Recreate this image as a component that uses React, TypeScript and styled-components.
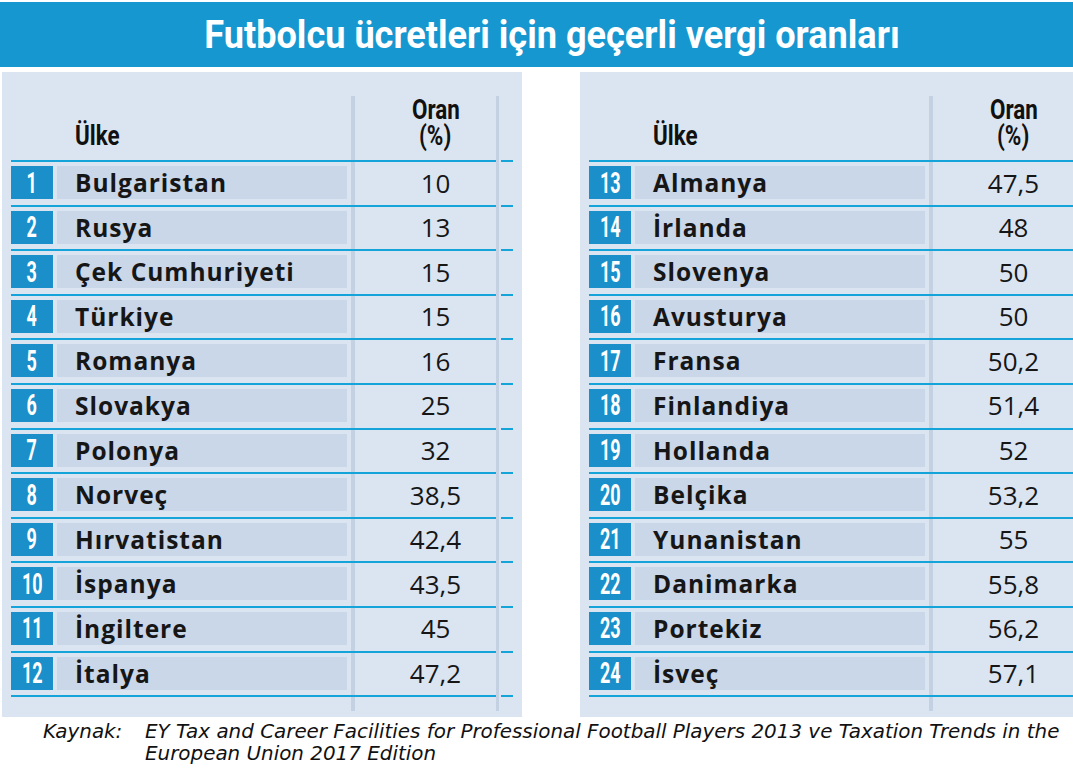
import React from 'react';
import styled, { createGlobalStyle } from 'styled-components';

const colors = {
  bar: '#1797cf',
  panel: '#dbe5f2',
  nameBg: '#c9d7e8',
  divider: '#c4d1e2',
  line: '#14a4da',
  numBox: '#1a8fc9',
  text: '#161616',
};

const heavy = `"Roboto", "Open Sans", sans-serif`;

const GlobalStyle = createGlobalStyle`
  html, body {
    margin: 0;
    padding: 0;
    background: #ffffff;
  }
  body {
    font-family: "Open Sans", "Noto Sans", sans-serif;
    color: ${colors.text};
    width: 1073px;
    height: 769px;
    overflow: hidden;
  }
`;

// no condensed face is installed, so the narrow headline type is squeezed
const Squeeze = styled.span<{ $x: number; $origin?: string }>`
  display: inline-block;
  white-space: nowrap;
  transform: scaleX(${(p) => p.$x});
  transform-origin: ${(p) => p.$origin || 'center'};
`;

const Page = styled.div`
  width: 1073px;
  height: 769px;
  overflow: hidden;
  padding-top: 2px;
  box-sizing: border-box;
`;

const TitleBar = styled.header`
  height: 65px;
  background: ${colors.bar};
  display: flex;
  align-items: center;
  justify-content: center;
`;

const Title = styled.h1`
  margin: 0;
  padding-left: 31px;
  font-family: ${heavy};
  font-weight: 700;
  font-size: 38px;
  line-height: 1;
  color: #ffffff;
`;

const Panels = styled.div`
  display: flex;
  gap: 58px;
  margin-top: 5px;
  padding-left: 2px;
`;

const Panel = styled.section`
  flex: 0 0 520px;
  background: ${colors.panel};
  padding: 24px 9px 6px 9px;
  box-sizing: border-box;
`;

// the two grey column rules run behind the rows
const Body = styled.div`
  width: 502px;
  padding-bottom: 14px;
  background:
    linear-gradient(${colors.divider}, ${colors.divider}) 340px 0 / 4px 100% no-repeat,
    linear-gradient(${colors.divider}, ${colors.divider}) 485px 0 / 3px 100% no-repeat;
`;

const HeaderRow = styled.div`
  height: 64px;
  display: flex;
  align-items: flex-end;
  padding-bottom: 11px;
  box-sizing: border-box;
  font-family: ${heavy};
  font-weight: 700;
  font-size: 28px;
  line-height: 26px;
  color: #111;
`;

const HeadName = styled.div`
  width: 344px;
  padding-left: 64px;
  box-sizing: border-box;
`;

const HeadValue = styled.div`
  width: 141px;
  padding-left: 20px;
  box-sizing: border-box;
  display: flex;
  flex-direction: column;
  align-items: center;
`;

const Row = styled.div<{ $last?: boolean }>`
  height: ${(p) => (p.$last ? '46.6px' : '44.6px')};
  box-sizing: border-box;
  display: flex;
  align-items: flex-start;
  padding-top: 4px;
  border-top: 2px solid;
  border-bottom: ${(p) => (p.$last ? '2px solid' : 'none')};
  border-image: linear-gradient(
      to right,
      ${colors.line} 484px,
      transparent 484px,
      transparent 489px,
      ${colors.line} 489px
    )
    1;
`;

const NumBox = styled.div`
  width: 42px;
  height: 33px;
  background: ${colors.numBox};
  color: #fff;
  display: flex;
  align-items: center;
  justify-content: center;
  font-family: ${heavy};
  font-weight: 700;
  font-size: 30px;
  line-height: 1;
`;

const NameCell = styled.div`
  margin-left: 4px;
  width: 290px;
  height: 33px;
  background: ${colors.nameBg};
  padding-left: 18px;
  box-sizing: border-box;
  display: flex;
  align-items: center;
  font-weight: 700;
  font-size: 24.5px;
  letter-spacing: 1px;
  white-space: nowrap;
`;

const ValueCell = styled.div`
  margin-left: 8px;
  width: 141px;
  height: 33px;
  padding-left: 20px;
  box-sizing: border-box;
  display: flex;
  align-items: center;
  justify-content: center;
  font-size: 26px;
  font-weight: 400;
`;

const Source = styled.footer`
  display: flex;
  padding: 4px 0 0 43px;
  font-family: "DejaVu Sans", "Open Sans", sans-serif;
  font-style: italic;
  font-size: 19.9px;
  line-height: 22px;
  color: #111;
`;

const SourceLabel = styled.div`
  flex: 0 0 102px;
`;

const SourceText = styled.div`
  white-space: nowrap;
`;

type Entry = [number, string, string];

const left: Entry[] = [
  [1, 'Bulgaristan', '10'],
  [2, 'Rusya', '13'],
  [3, 'Çek Cumhuriyeti', '15'],
  [4, 'Türkiye', '15'],
  [5, 'Romanya', '16'],
  [6, 'Slovakya', '25'],
  [7, 'Polonya', '32'],
  [8, 'Norveç', '38,5'],
  [9, 'Hırvatistan', '42,4'],
  [10, 'İspanya', '43,5'],
  [11, 'İngiltere', '45'],
  [12, 'İtalya', '47,2'],
];

const right: Entry[] = [
  [13, 'Almanya', '47,5'],
  [14, 'İrlanda', '48'],
  [15, 'Slovenya', '50'],
  [16, 'Avusturya', '50'],
  [17, 'Fransa', '50,2'],
  [18, 'Finlandiya', '51,4'],
  [19, 'Hollanda', '52'],
  [20, 'Belçika', '53,2'],
  [21, 'Yunanistan', '55'],
  [22, 'Danimarka', '55,8'],
  [23, 'Portekiz', '56,2'],
  [24, 'İsveç', '57,1'],
];

function RateTable({ rows }: { rows: Entry[] }) {
  return (
    <Panel>
      <Body>
        <HeaderRow>
          <HeadName>
            <Squeeze $x={0.8} $origin="left">Ülke</Squeeze>
          </HeadName>
          <HeadValue>
            <Squeeze $x={0.8}>Oran</Squeeze>
            <Squeeze $x={0.8}>(%)</Squeeze>
          </HeadValue>
        </HeaderRow>
        {rows.map(([rank, country, rate], i) => (
          <Row key={rank} $last={i === rows.length - 1}>
            <NumBox>
              <Squeeze $x={0.6}>{rank}</Squeeze>
            </NumBox>
            <NameCell>{country}</NameCell>
            <ValueCell>{rate}</ValueCell>
          </Row>
        ))}
      </Body>
    </Panel>
  );
}

export default function App() {
  return (
    <Page>
      <GlobalStyle />
      <TitleBar>
        <Title>
          <Squeeze $x={0.95}>Futbolcu ücretleri için geçerli vergi oranları</Squeeze>
        </Title>
      </TitleBar>
      <Panels>
        <RateTable rows={left} />
        <RateTable rows={right} />
      </Panels>
      <Source>
        <SourceLabel>Kaynak:</SourceLabel>
        <SourceText>
          EY Tax and Career Facilities for Professional Football Players 2013 ve Taxation Trends in the
          <br />
          European Union 2017 Edition
        </SourceText>
      </Source>
    </Page>
  );
}
